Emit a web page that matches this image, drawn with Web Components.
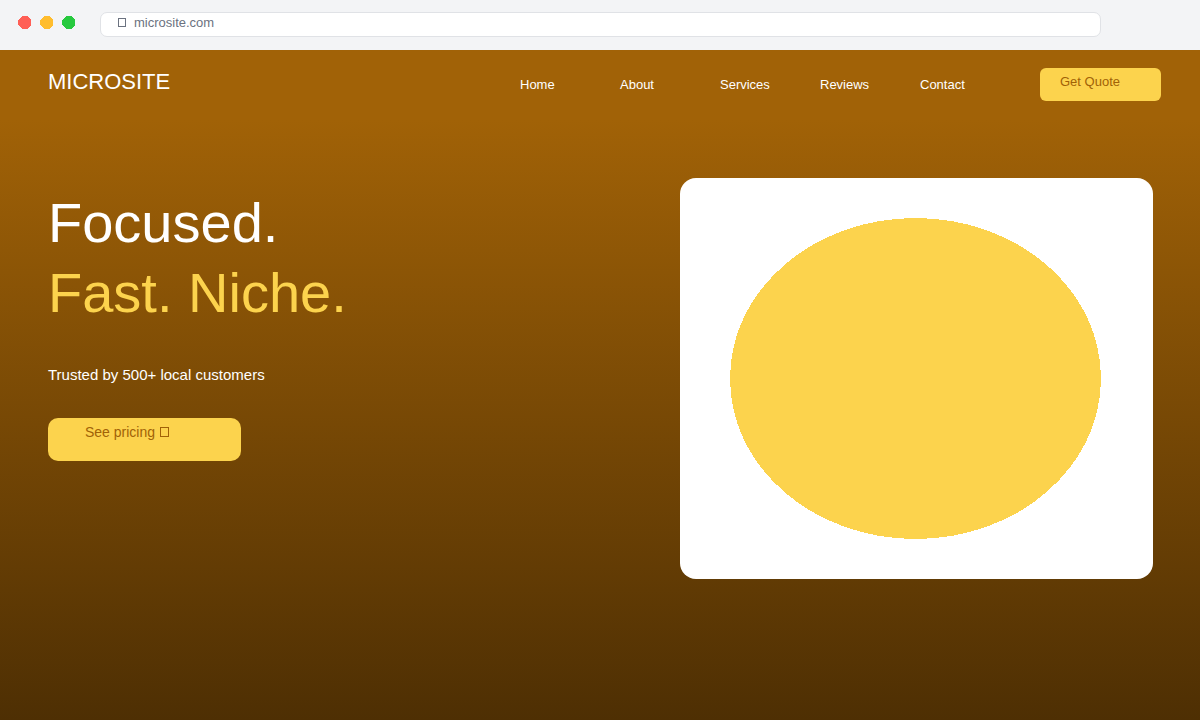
<!DOCTYPE html>
<html lang="en">
<head>
<meta charset="utf-8">
<meta name="viewport" content="width=device-width, initial-scale=1">
<title>Microsite</title>
<style>
  :root {
    --brand: #a16207;
    --brand-deep: #4e2f03;
    --accent: #fcd34d;
  }
  body {
    margin: 0;
    font-family: "Liberation Sans", Arial, Helvetica, sans-serif;
  }
</style>
</head>
<body>
<micro-page>
  <browser-bar slot="chrome" address="microsite.com"></browser-bar>
  <site-nav slot="nav" brand="MICROSITE">
    <nav-link href="#home">Home</nav-link>
    <nav-link href="#about">About</nav-link>
    <nav-link href="#services">Services</nav-link>
    <nav-link href="#reviews">Reviews</nav-link>
    <nav-link href="#contact">Contact</nav-link>
    <action-button slot="action" size="small">Get Quote</action-button>
  </site-nav>
  <site-hero>
    <span slot="title">Focused.</span>
    <span slot="accent">Fast. Niche.</span>
    <span slot="lead">Trusted by 500+ local customers</span>
    <action-button slot="action" size="large">See pricing <glyph-box size="large"></glyph-box></action-button>
    <hero-art slot="art"></hero-art>
  </site-hero>
</micro-page>

<script>
class BaseElement extends HTMLElement {
  connectedCallback() {
    if (this.shadowRoot) return;
    this.attachShadow({ mode: "open" }).innerHTML = this.render();
  }
}

customElements.define("micro-page", class extends BaseElement {
  render() {
    return `
      <style>
        :host { display: flex; flex-direction: column; min-height: 100vh; }
        main { flex: 1; background: linear-gradient(var(--brand), var(--brand-deep)); }
      </style>
      <slot name="chrome"></slot>
      <slot name="nav"></slot>
      <main><slot></slot></main>`;
  }
});

customElements.define("glyph-box", class extends BaseElement {
  render() {
    return `
      <style>
        :host { display: inline-block; box-sizing: border-box; width: 8px; height: 9px; border: 1px solid currentColor; }
        :host([size="large"]) { width: 9px; height: 10px; margin-left: 1px; }
      </style>`;
  }
});

customElements.define("browser-bar", class extends BaseElement {
  render() {
    return `
      <style>
        :host { display: flex; align-items: flex-start; box-sizing: border-box; height: 50px; padding: 12px 99px 0 18px; background: #f3f4f6; }
        .lights { display: flex; gap: 9px; width: 82px; padding-top: 4px; flex: none; }
        svg { width: 13px; height: 13px; }
        label { flex: 1; display: flex; align-items: center; gap: 8px; box-sizing: border-box; height: 25px; padding: 0 17px 4px; background: #fff; border: 1px solid #e0e2e6; border-radius: 7px; color: #6b7280; }
        input { flex: 1; min-width: 0; padding: 0; border: 0; outline: 0; background: none; color: inherit; font: 13px/16px "Liberation Sans", Arial, sans-serif; }
      </style>
      <div class="lights">
        <svg viewBox="0 0 13 13" shape-rendering="crispEdges"><path d="M4 0h5l4 4v5l-4 4h-5l-4-4v-5z" fill="#ff5f56"/></svg>
        <svg viewBox="0 0 13 13" shape-rendering="crispEdges"><path d="M4 0h5l4 4v5l-4 4h-5l-4-4v-5z" fill="#ffbd2e"/></svg>
        <svg viewBox="0 0 13 13" shape-rendering="crispEdges"><path d="M4 0h5l4 4v5l-4 4h-5l-4-4v-5z" fill="#27c93f"/></svg>
      </div>
      <label><glyph-box></glyph-box><input type="text" aria-label="Address" value="${this.getAttribute("address")}"></label>`;
  }
});

customElements.define("nav-link", class extends BaseElement {
  render() {
    return `
      <style>
        :host { display: block; width: 100px; }
        a { color: #fff; text-decoration: none; font-size: 13px; line-height: 16px; }
      </style>
      <a href="${this.getAttribute("href")}"><slot></slot></a>`;
  }
});

customElements.define("site-nav", class extends BaseElement {
  render() {
    return `
      <style>
        :host { display: flex; align-items: center; box-sizing: border-box; height: 70px; padding: 0 39px 2px 48px; background: var(--brand); color: #fff; }
        .brand { margin-right: auto; padding-bottom: 4px; font-size: 22px; line-height: 24px; }
        nav { display: flex; margin-right: 20px; }
      </style>
      <div class="brand">${this.getAttribute("brand")}</div>
      <nav><slot></slot></nav>
      <slot name="action"></slot>`;
  }
});

customElements.define("action-button", class extends BaseElement {
  render() {
    return `
      <style>
        :host { display: block; }
        button { display: block; box-sizing: border-box; width: 121px; height: 33px; padding: 0 20px 4px; border: 0; border-radius: 6px; background: var(--accent); color: var(--brand); font: 13px/16px "Liberation Sans", Arial, sans-serif; text-align: left; cursor: pointer; }
        :host([size="large"]) button { width: 193px; height: 43px; padding: 0 37px 16px; border-radius: 10px; font-size: 14px; }
      </style>
      <button type="button"><slot></slot></button>`;
  }
});

customElements.define("hero-art", class extends BaseElement {
  render() {
    return `
      <style>
        :host { display: block; box-sizing: border-box; padding: 40px 52px 40px 50px; background: #fff; border-radius: 16px; }
        svg { display: block; width: 100%; }
      </style>
      <svg viewBox="0 0 371 321" shape-rendering="crispEdges" aria-hidden="true"><ellipse cx="185.5" cy="160.5" rx="185.5" ry="160.5" fill="#fcd34d"/></svg>`;
  }
});

customElements.define("site-hero", class extends BaseElement {
  render() {
    return `
      <style>
        :host { display: grid; grid-template-columns: 632fr 473fr; align-items: start; padding: 58px 47px 48px 48px; color: #fff; }
        .copy { padding-top: 10px; }
        h1 { margin: 0; font-size: 56px; line-height: 70px; font-weight: 400; }
        .accent { display: block; color: var(--accent); }
        p { margin: 38px 0 34px; font-size: 15px; line-height: 18px; }
      </style>
      <div class="copy">
        <h1><slot name="title"></slot><span class="accent"><slot name="accent"></slot></span></h1>
        <p><slot name="lead"></slot></p>
        <slot name="action"></slot>
      </div>
      <slot name="art"></slot>`;
  }
});
</script>
</body>
</html>
